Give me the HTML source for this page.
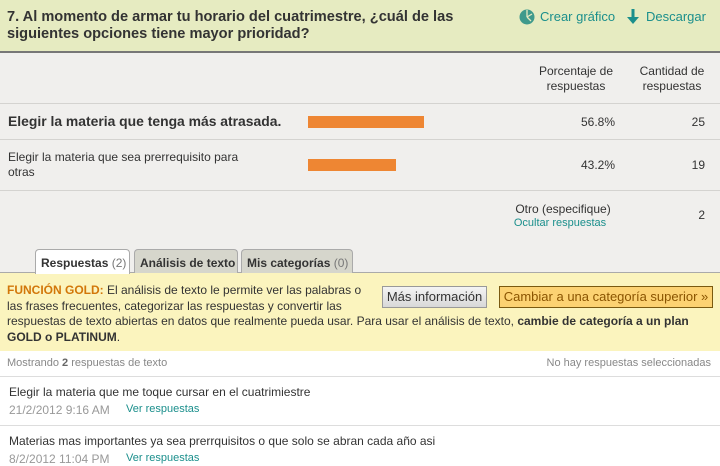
<!DOCTYPE html>
<html><head><meta charset="utf-8"><style>
*{margin:0;padding:0;box-sizing:border-box}
body{width:720px;height:466px;overflow:hidden;background:#f0efed;font-family:"Liberation Sans",Arial,sans-serif;color:#333;position:relative}
.a{position:absolute;white-space:nowrap}
.hdr{position:absolute;left:0;top:0;width:720px;height:53px;background:#e6ebc1;border-bottom:2px solid #777}
.line{position:absolute;left:0;width:720px;height:1px;background:#d4d3d0}
.teal{color:#1b8f8c}
.bar{position:absolute;background:#ee8633;height:12px}
.tab{position:absolute;top:249px;height:24px;border:1px solid #aaa;border-bottom:none;border-radius:4px 4px 0 0;background:#d6d6cc;font-size:12px;font-weight:bold;padding:6px 0 0 5px;color:#333}
.tab span{font-weight:normal;color:#777}
.yel{position:absolute;left:0;top:272px;width:720px;height:79px;background:#fbf4be;border-top:1px solid #aaa}
.btn{position:absolute;top:286px;height:22px;font-size:13px;text-align:center;line-height:20px}
.white{position:absolute;left:0;top:351px;width:720px;height:115px;background:#fff}
</style></head><body>
<div class="hdr"></div>
<div class="a" style="left:7px;top:9px;font-size:14.6px;font-weight:bold;line-height:17px;color:#333">7. Al momento de armar tu horario del cuatrimestre, ¿cuál de las<br>siguientes opciones tiene mayor prioridad?</div>
<svg class="a" style="left:519px;top:9px" width="16" height="16" viewBox="0 0 16 16"><circle cx="8" cy="8" r="7.5" fill="#3f9a8c"/><path d="M8 8 L8 1 M8 8 L13 5 M8 8 L12 12" stroke="#e6ebc1" stroke-width="1.3" fill="none"/></svg>
<div class="a teal" style="left:540px;top:9px;font-size:13px;line-height:16px">Crear gráfico</div>
<svg class="a" style="left:627px;top:9px" width="12" height="16" viewBox="0 0 12 16"><path d="M6 0 V10" stroke="#1b8f8c" stroke-width="3"/><path d="M0 8 L12 8 L6 15 Z" fill="#1b8f8c"/></svg>
<div class="a teal" style="left:646px;top:9px;font-size:13px;line-height:16px">Descargar</div>

<div class="a" style="left:526px;top:64px;width:100px;text-align:center;font-size:12px;line-height:15px">Porcentaje de<br>respuestas</div>
<div class="a" style="left:627px;top:64px;width:90px;text-align:center;font-size:12px;line-height:15px">Cantidad de<br>respuestas</div>
<div class="line" style="top:103px"></div>
<div class="a" style="left:8px;top:113px;font-size:13.9px;font-weight:bold">Elegir la materia que tenga más atrasada.</div>
<div class="bar" style="left:308px;top:116px;width:116px"></div>
<div class="a" style="left:500px;top:115px;width:115px;text-align:right;font-size:12px">56.8%</div>
<div class="a" style="left:650px;top:115px;width:55px;text-align:right;font-size:12px">25</div>
<div class="line" style="top:139px"></div>
<div class="a" style="left:8px;top:150px;font-size:12px;line-height:15px">Elegir la materia que sea prerrequisito para<br>otras</div>
<div class="bar" style="left:308px;top:159px;width:88px"></div>
<div class="a" style="left:500px;top:158px;width:115px;text-align:right;font-size:12px">43.2%</div>
<div class="a" style="left:650px;top:158px;width:55px;text-align:right;font-size:12px">19</div>
<div class="line" style="top:190px"></div>
<div class="a" style="left:500px;top:202px;width:126px;text-align:center;font-size:12px">Otro (especifique)</div>
<div class="a teal" style="left:500px;top:217px;width:120px;text-align:center;font-size:11px">Ocultar respuestas</div>
<div class="a" style="left:650px;top:208px;width:55px;text-align:right;font-size:12px">2</div>

<div class="yel"></div>
<div class="tab" style="left:35px;width:95px;background:#fff;height:25px;z-index:2">Respuestas <span>(2)</span></div>
<div class="tab" style="left:134px;width:104px">Análisis de texto</div>
<div class="tab" style="left:241px;width:112px">Mis categorías <span>(0)</span></div>
<div class="a" style="left:7px;top:283px;font-size:12px;line-height:15.7px;color:#333"><b style="color:#d2770a">FUNCIÓN GOLD:</b> El análisis de texto le permite ver las palabras o<br>las frases frecuentes, categorizar las respuestas y convertir las<br>respuestas de texto abiertas en datos que realmente pueda usar. Para usar el análisis de texto, <b>cambie de categoría a un plan</b><br><b>GOLD o PLATINUM</b>.</div>
<div class="btn" style="left:382px;width:105px;border:1px solid #999;background:linear-gradient(#f4f4f4,#d8d8d8);color:#333">Más información</div>
<div class="btn" style="left:499px;width:214px;border:1px solid #7a5a10;background:#fcd272;color:#8a5400">Cambiar a una categoría superior »</div>

<div class="white"></div>
<div class="a" style="left:7px;top:357px;font-size:11px;color:#888">Mostrando <b style="color:#666">2</b> respuestas de texto</div>
<div class="a" style="left:500px;top:357px;width:211px;text-align:right;font-size:11px;color:#888">No hay respuestas seleccionadas</div>
<div class="line" style="top:376px;background:#ddd"></div>
<div class="a" style="left:9px;top:385px;font-size:12px">Elegir la materia que me toque cursar en el cuatrimiestre</div>
<div class="a" style="left:9px;top:403px;font-size:12px;color:#999">21/2/2012 9:16 AM</div>
<div class="a teal" style="left:126px;top:403px;font-size:11px">Ver respuestas</div>
<div class="line" style="top:425px;background:#ddd"></div>
<div class="a" style="left:9px;top:434px;font-size:12px">Materias mas importantes ya sea prerrquisitos o que solo se abran cada año asi</div>
<div class="a" style="left:9px;top:452px;font-size:12px;color:#999">8/2/2012 11:04 PM</div>
<div class="a teal" style="left:126px;top:452px;font-size:11px">Ver respuestas</div>
</body></html>
